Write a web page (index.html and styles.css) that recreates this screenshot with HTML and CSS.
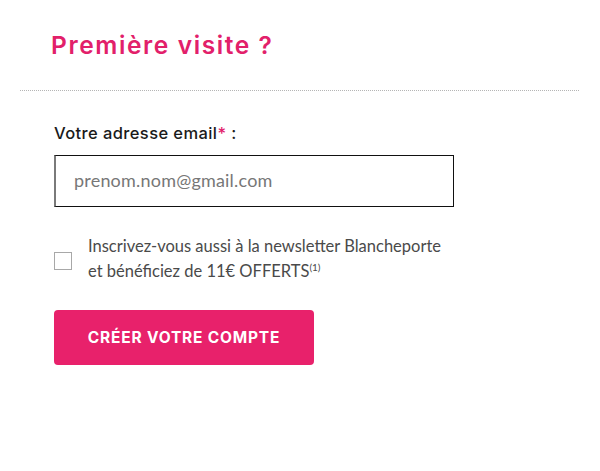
FILE: index.html
```html
<!DOCTYPE html>
<html lang="fr">
<head>
<meta charset="utf-8">
<link rel="stylesheet" href="styles.css">
</head>
<body>
<div class="page">
  <h1 class="title">Première visite ?</h1>
  <hr class="sep">
  <form class="form">
    <label class="label" for="email">Votre adresse email<span class="req">*</span> :</label>
    <input class="input" id="email" type="text" placeholder="prenom.nom@gmail.com">
    <label class="optin">
      <span class="box"></span>
      <span class="optin-text">Inscrivez-vous aussi à la newsletter Blancheporte<br>et bénéficiez de 11€ OFFERTS<sup>(1)</sup></span>
    </label>
    <button class="btn" type="button">CRÉER VOTRE COMPTE</button>
  </form>
</div>
</body>
</html>
```
FILE: styles.css
```css
html, body { margin: 0; padding: 0; background: #fff; }
.page { width: 600px; height: 471px; padding: 0 20px; box-sizing: border-box; }
.title {
  margin: 0; padding: 29px 0 0 31px;
  font-family: Inter, "Open Sans", sans-serif;
  font-weight: 600; font-size: 24.5px; line-height: 32px;
  color: #e2206a; letter-spacing: 1.6px;
}
.sep {
  margin: 29px 0 0 0; width: 559px; border: 0;
  border-top: 1px dotted #b5b5b5; height: 0;
}
.form { padding: 32px 0 0 34px; display: flex; flex-direction: column; align-items: flex-start; }
.label {
  font-family: Inter, "Open Sans", sans-serif; font-weight: 500;
  font-size: 16.5px; line-height: 20px; color: #1a1a1a; letter-spacing: 0.4px;
}
.req { color: #e2206a; }
.input {
  margin-top: 12px; width: 400px; height: 52px; box-sizing: border-box;
  border: 1px solid #111; border-left: 2px solid #7a7a7a;
  padding: 0 0 2px 18px; font-family: Lato, "Open Sans", sans-serif;
  font-size: 18px; color: #333; outline: none; letter-spacing: 0.2px;
}
.input::placeholder { color: #777; }
.optin { margin-top: 27px; display: flex; align-items: center; gap: 16px; cursor: pointer; }
.box { width: 18px; height: 18px; border: 1.5px solid #a8a8a8; box-sizing: border-box; flex: none; margin-top: 3px; }
.optin-text {
  font-family: Lato, "Open Sans", sans-serif; font-size: 16.5px; line-height: 25px; color: #4a4a4a;
}
.optin-text sup { font-size: 10px; vertical-align: 6px; line-height: 0; }
.btn {
  margin-top: 26px; width: 260px; height: 55px; border: 0; border-radius: 4px;
  background: #e8216b; color: #fff;
  font-family: Inter, "Open Sans", sans-serif; font-weight: 700; font-size: 15.5px;
  letter-spacing: 0.8px; cursor: pointer; padding: 0;
}
```
